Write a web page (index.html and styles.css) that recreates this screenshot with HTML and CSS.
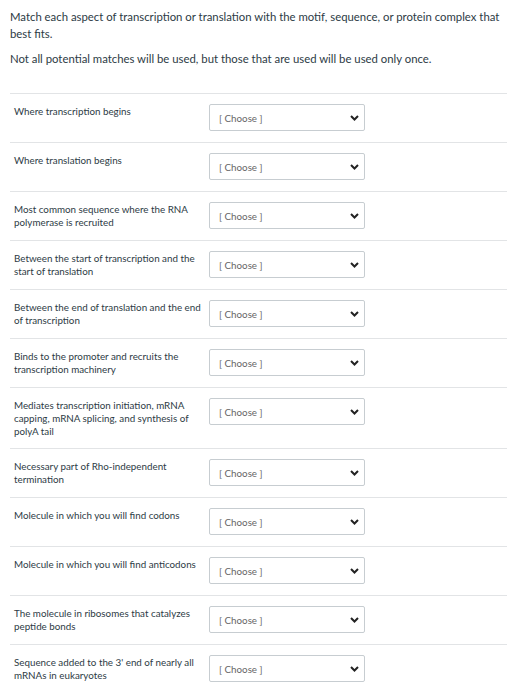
FILE: index.html
```html
<!DOCTYPE html>
<html>
<head>
    <title>Quiz question</title>
    <link rel="stylesheet" href="styles.css">
</head>
<body>

<div class="question">
    <div class="question-text">
        <p>Match each aspect of transcription or translation with the motif, sequence, or protein complex that best fits.</p>
        <p>Not all potential matches will be used, but those that are used will be used only once.</p>
    </div>

    <div class="answers">
        <div class="answer-row">
            <div class="answer-label">Where transcription begins</div>
            <div class="select-wrap">
                <select><option>[ Choose ]</option></select>
                <svg class="chevron" width="9" height="6" viewBox="0 0 9 6"><path d="M1 1 L4.5 4.5 L8 1" fill="none" stroke="#222" stroke-width="2"/></svg>
            </div>
        </div>
        <div class="answer-row">
            <div class="answer-label">Where translation begins</div>
            <div class="select-wrap">
                <select><option>[ Choose ]</option></select>
                <svg class="chevron" width="9" height="6" viewBox="0 0 9 6"><path d="M1 1 L4.5 4.5 L8 1" fill="none" stroke="#222" stroke-width="2"/></svg>
            </div>
        </div>
        <div class="answer-row">
            <div class="answer-label">Most common sequence where the RNA polymerase is recruited</div>
            <div class="select-wrap">
                <select><option>[ Choose ]</option></select>
                <svg class="chevron" width="9" height="6" viewBox="0 0 9 6"><path d="M1 1 L4.5 4.5 L8 1" fill="none" stroke="#222" stroke-width="2"/></svg>
            </div>
        </div>
        <div class="answer-row">
            <div class="answer-label">Between the start of transcription and the start of translation</div>
            <div class="select-wrap">
                <select><option>[ Choose ]</option></select>
                <svg class="chevron" width="9" height="6" viewBox="0 0 9 6"><path d="M1 1 L4.5 4.5 L8 1" fill="none" stroke="#222" stroke-width="2"/></svg>
            </div>
        </div>
        <div class="answer-row">
            <div class="answer-label">Between the end of translation and the end of transcription</div>
            <div class="select-wrap">
                <select><option>[ Choose ]</option></select>
                <svg class="chevron" width="9" height="6" viewBox="0 0 9 6"><path d="M1 1 L4.5 4.5 L8 1" fill="none" stroke="#222" stroke-width="2"/></svg>
            </div>
        </div>
        <div class="answer-row">
            <div class="answer-label">Binds to the promoter and recruits the transcription machinery</div>
            <div class="select-wrap">
                <select><option>[ Choose ]</option></select>
                <svg class="chevron" width="9" height="6" viewBox="0 0 9 6"><path d="M1 1 L4.5 4.5 L8 1" fill="none" stroke="#222" stroke-width="2"/></svg>
            </div>
        </div>
        <div class="answer-row">
            <div class="answer-label">Mediates transcription initiation, mRNA capping, mRNA splicing, and synthesis of polyA tail</div>
            <div class="select-wrap">
                <select><option>[ Choose ]</option></select>
                <svg class="chevron" width="9" height="6" viewBox="0 0 9 6"><path d="M1 1 L4.5 4.5 L8 1" fill="none" stroke="#222" stroke-width="2"/></svg>
            </div>
        </div>
        <div class="answer-row">
            <div class="answer-label">Necessary part of Rho-independent termination</div>
            <div class="select-wrap">
                <select><option>[ Choose ]</option></select>
                <svg class="chevron" width="9" height="6" viewBox="0 0 9 6"><path d="M1 1 L4.5 4.5 L8 1" fill="none" stroke="#222" stroke-width="2"/></svg>
            </div>
        </div>
        <div class="answer-row">
            <div class="answer-label">Molecule in which you will find codons</div>
            <div class="select-wrap">
                <select><option>[ Choose ]</option></select>
                <svg class="chevron" width="9" height="6" viewBox="0 0 9 6"><path d="M1 1 L4.5 4.5 L8 1" fill="none" stroke="#222" stroke-width="2"/></svg>
            </div>
        </div>
        <div class="answer-row">
            <div class="answer-label">Molecule in which you will find anticodons</div>
            <div class="select-wrap">
                <select><option>[ Choose ]</option></select>
                <svg class="chevron" width="9" height="6" viewBox="0 0 9 6"><path d="M1 1 L4.5 4.5 L8 1" fill="none" stroke="#222" stroke-width="2"/></svg>
            </div>
        </div>
        <div class="answer-row">
            <div class="answer-label">The molecule in ribosomes that catalyzes peptide bonds</div>
            <div class="select-wrap">
                <select><option>[ Choose ]</option></select>
                <svg class="chevron" width="9" height="6" viewBox="0 0 9 6"><path d="M1 1 L4.5 4.5 L8 1" fill="none" stroke="#222" stroke-width="2"/></svg>
            </div>
        </div>
        <div class="answer-row">
            <div class="answer-label">Sequence added to the 3' end of nearly all mRNAs in eukaryotes</div>
            <div class="select-wrap">
                <select><option>[ Choose ]</option></select>
                <svg class="chevron" width="9" height="6" viewBox="0 0 9 6"><path d="M1 1 L4.5 4.5 L8 1" fill="none" stroke="#222" stroke-width="2"/></svg>
            </div>
        </div>
    </div>
</div>

</body>
</html>
```

FILE: styles.css
```css
body {
    margin: 0;
    background-color: #fff;
    font-family: Lato, "Open Sans", sans-serif;
    color: #2d3b45;
}
.question {
    margin-left: 10px;
    width: 497px;
}
.question-text {
    padding-top: 8px;
    font-size: 11.35px;
    line-height: 17px;
}
.question-text p {
    margin: 0 0 8px 0;
}
.answers {
    margin-top: 26px;
}
.answer-row {
    display: flex;
    align-items: flex-start;
    border-top: 1px solid #e2e4e6;
    padding: 10px 0;
}
.answer-label {
    flex: 0 0 191px;
    padding-left: 4px;
    margin-right: 4px;
    font-size: 9.8px;
    line-height: 13px;
    padding-top: 1px;
}
.select-wrap {
    position: relative;
    width: 156px;
    margin-bottom: 1px;
}
select {
    -webkit-appearance: none;
    appearance: none;
    display: block;
    width: 156px;
    height: 27px;
    margin: 0;
    padding: 0 20px 0 9px;
    border: 1px solid #c7cdd1;
    border-radius: 2px;
    background-color: #fff;
    font-family: Lato, "Open Sans", sans-serif;
    font-size: 9.8px;
    color: #666;
}
.chevron {
    position: absolute;
    right: 6px;
    top: 11px;
}
```
